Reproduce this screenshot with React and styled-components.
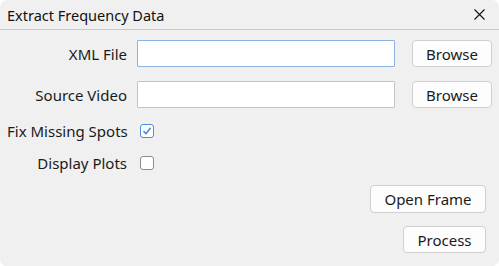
import React, { useState } from 'react';
import styled, { createGlobalStyle } from 'styled-components';

const GlobalStyle = createGlobalStyle`
  html, body {
    margin: 0;
    padding: 0;
    background: #ffffff;
  }
  * {
    box-sizing: border-box;
  }
`;

const Window = styled.div`
  width: 499px;
  height: 266px;
  background: #f0f0f0;
  border-radius: 7px;
  overflow: hidden;
  font-family: "Noto Sans", "Open Sans", sans-serif;
  color: #1a1a1a;
`;

const TitleBar = styled.div`
  height: 30px;
  display: flex;
  align-items: center;
  justify-content: space-between;
  padding: 0 14px 0 7px;
  border-bottom: 1px solid #c9c9c9;
`;

const Title = styled.div`
  font-size: 14.5px;
  color: #111;
`;

const CloseButton = styled.button`
  border: none;
  background: transparent;
  padding: 0;
  width: 11px;
  height: 11px;
  display: flex;
  align-items: center;
  justify-content: center;
  cursor: pointer;
`;

const Body = styled.div`
  padding: 10px 7px 0 7px;
  display: flex;
  flex-direction: column;
`;

const Row = styled.div`
  display: flex;
  align-items: center;
  height: ${p => p.$h || 27}px;
  margin-top: ${p => p.$mt || 0}px;
`;

const Label = styled.label`
  width: 120px;
  margin-right: 10px;
  text-align: right;
  font-size: 15px;
  white-space: nowrap;
`;

const TextInput = styled.input`
  width: 258px;
  height: 27px;
  margin-right: 17px;
  background: #ffffff;
  border: 1px solid ${p => (p.$focused ? '#8cb2e2' : '#c4c4c4')};
  border-radius: 1px;
  font: inherit;
  font-size: 15px;
  padding: 0 4px;
  outline: none;
`;

const Button = styled.button`
  width: ${p => p.$w || 80}px;
  height: ${p => p.$h || 27}px;
  background: #fdfdfd;
  border: 1px solid #d0d0d0;
  border-radius: 4px;
  font-family: inherit;
  font-size: 15px;
  color: #1a1a1a;
  padding: 0;
  cursor: pointer;
`;

const CheckBox = styled.span`
  width: 14px;
  height: 14px;
  margin-left: 3px;
  border-radius: 3px;
  background: #ffffff;
  border: 1px solid ${p => (p.$checked ? '#4b8fdc' : '#8c8c8c')};
  display: flex;
  align-items: center;
  justify-content: center;
`;

const ActionRow = styled.div`
  display: flex;
  justify-content: flex-end;
  padding-right: 6px;
  margin-top: ${p => p.$mt || 0}px;
`;

function Check({ checked, onToggle }) {
  return (
    <CheckBox $checked={checked} onClick={onToggle}>
      {checked && (
        <svg width="10" height="10" viewBox="0 0 10 10">
          <path d="M1.5 5.2 L4 7.6 L8.6 1.8" fill="none" stroke="#3f86d6" strokeWidth="1.5" />
        </svg>
      )}
    </CheckBox>
  );
}

export default function App() {
  const [fixSpots, setFixSpots] = useState(true);
  const [plots, setPlots] = useState(false);

  return (
    <>
      <GlobalStyle />
      <Window>
        <TitleBar>
          <Title>Extract Frequency Data</Title>
          <CloseButton aria-label="Close">
            <svg width="11" height="11" viewBox="0 0 11 11">
              <path d="M0.5 0.5 L10.5 10.5 M10.5 0.5 L0.5 10.5" stroke="#111" strokeWidth="1.1" />
            </svg>
          </CloseButton>
        </TitleBar>
        <Body>
          <Row>
            <Label>XML File</Label>
            <TextInput $focused />
            <Button>Browse</Button>
          </Row>
          <Row $mt={14}>
            <Label>Source Video</Label>
            <TextInput />
            <Button>Browse</Button>
          </Row>
          <Row $h={20} $mt={13}>
            <Label>Fix Missing Spots</Label>
            <Check checked={fixSpots} onToggle={() => setFixSpots(!fixSpots)} />
          </Row>
          <Row $h={20} $mt={12}>
            <Label>Display Plots</Label>
            <Check checked={plots} onToggle={() => setPlots(!plots)} />
          </Row>
          <ActionRow $mt={12}>
            <Button $w={116} $h={28}>Open Frame</Button>
          </ActionRow>
          <ActionRow $mt={13}>
            <Button $w={83}>Process</Button>
          </ActionRow>
        </Body>
      </Window>
    </>
  );
}
